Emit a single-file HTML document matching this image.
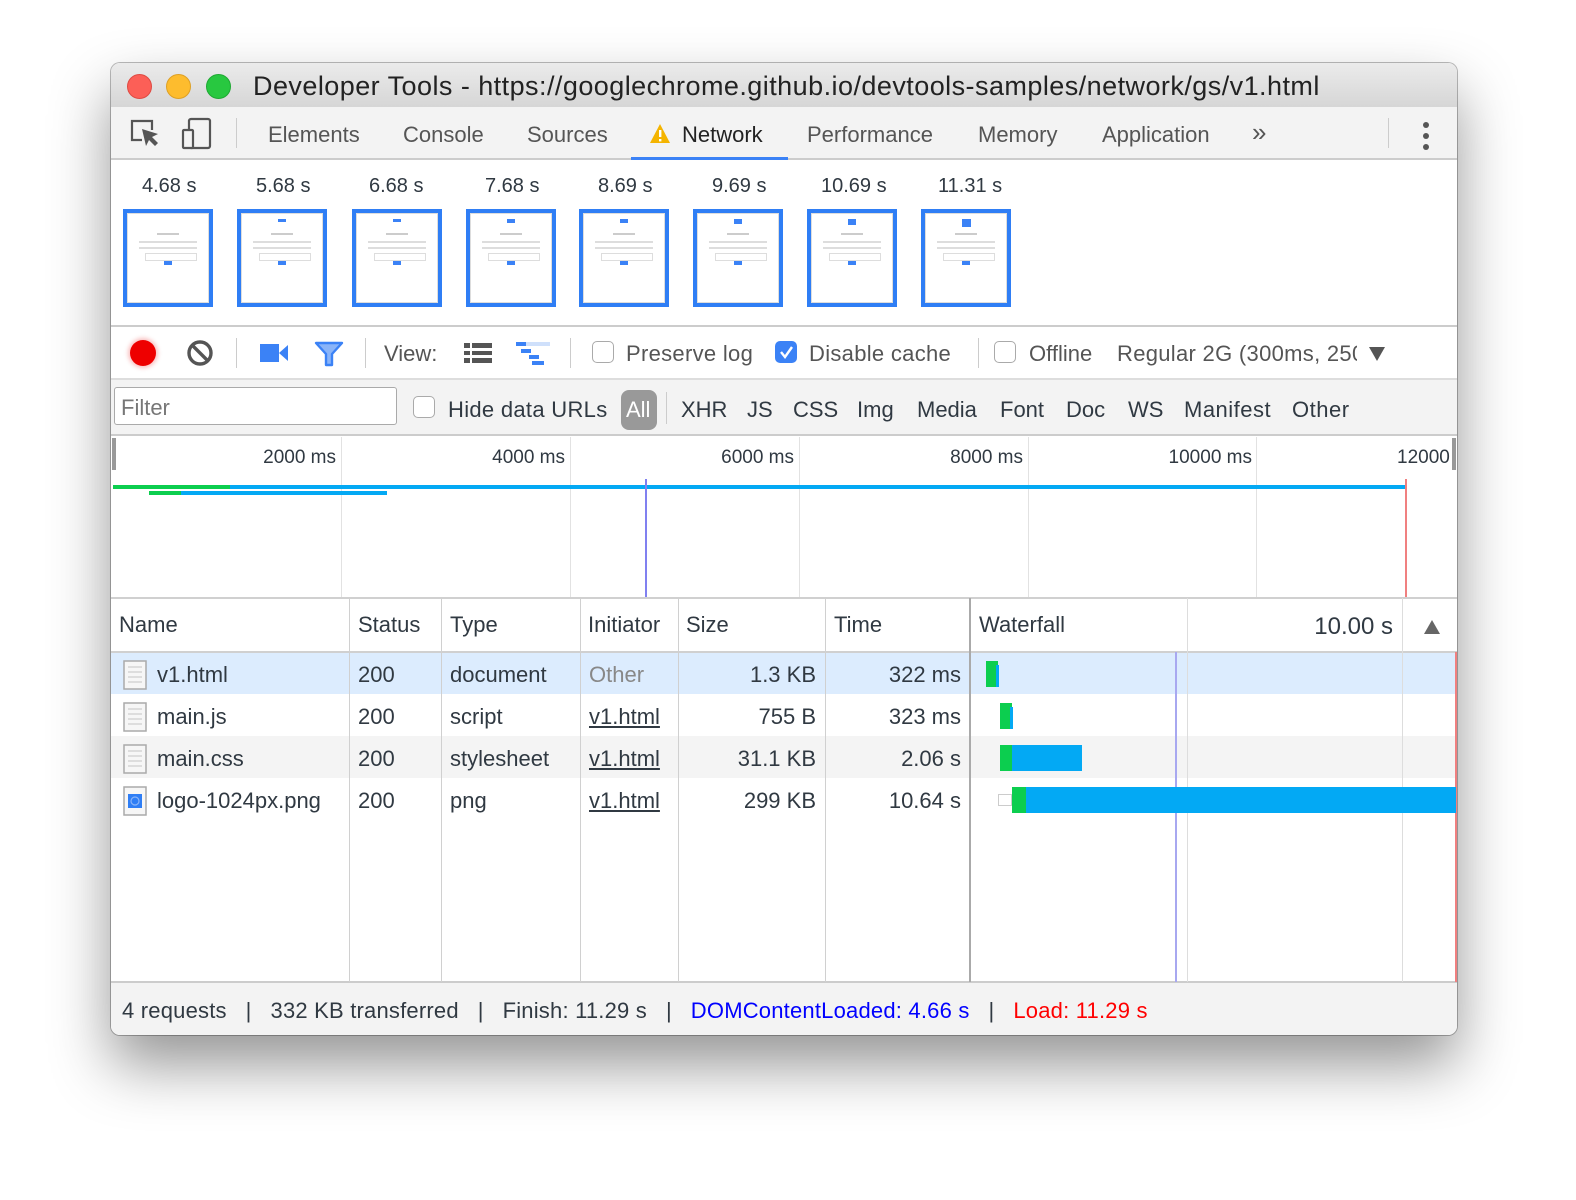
<!DOCTYPE html>
<html><head><meta charset="utf-8"><style>
*{margin:0;padding:0;box-sizing:border-box}
body{width:1576px;height:1200px;background:#fff;position:relative;overflow:hidden;font-family:"Liberation Sans",Arial,sans-serif;color:#303942}
.a{position:absolute}
.t{position:absolute;white-space:nowrap;font-size:22px;line-height:26px;color:#303942}
.g{color:#555}
.r{text-align:right}
.vl{position:absolute;width:1px;background:#d0d0d0}
.hl{position:absolute;height:2px;background:#d0d0d0}
.fr{position:absolute;top:209px;width:90px;height:98px;border:4px solid #2f7ef5;background:#fff;box-shadow:inset 0 0 0 1px #ddd}
.fr i{position:absolute;display:block}
.cb{position:absolute;width:22px;height:22px;border:1.5px solid #aaa;border-radius:5px;background:#fff}
</style></head><body>
<div class="a" style="left:111px;top:63px;width:1346px;height:972px;border-radius:9px;background:#fff;box-shadow:0 30px 60px rgba(0,0,0,0.42),0 0 0 1px #bbb;overflow:hidden">
 <div class="a" style="left:0;top:0;width:1346px;height:44px;background:linear-gradient(#ebebeb,#d6d6d6)"></div>
 <div class="a" style="left:0;top:44px;width:1346px;height:53px;background:#f3f3f3;border-bottom:2px solid #ccc"></div>
 <div class="a" style="left:0;top:262px;width:1346px;height:2px;background:#ccc"></div>
 <div class="a" style="left:0;top:315px;width:1346px;height:58px;background:#f3f3f3;border-top:2px solid #ddd;border-bottom:2px solid #ccc"></div>
 <div class="a" style="left:0;top:918px;width:1346px;height:54px;background:#f3f3f3;border-top:2px solid #ccc"></div>
</div>
<div class="a" style="left:127px;top:74px;width:25px;height:25px;border-radius:50%;background:#fc5f57;border:1px solid #de4a42"></div>
<div class="a" style="left:166px;top:74px;width:25px;height:25px;border-radius:50%;background:#fdbc2e;border:1px solid #dea024"></div>
<div class="a" style="left:206px;top:74px;width:25px;height:25px;border-radius:50%;background:#28c840;border:1px solid #1ea932"></div>
<div class="t" style="left:253px;top:70px;font-size:27px;line-height:32px;letter-spacing:0.45px;color:#222">Developer Tools - https://googlechrome.github.io/devtools-samples/network/gs/v1.html</div>
<svg class="a" style="left:128px;top:118px" width="34" height="32" viewBox="0 0 34 32"><path d="M14 22H4V3h20v9" fill="none" stroke="#555" stroke-width="2.2"/><path d="M14 11l4 17 3-6 6 6 3-3-6-6 6-3z" fill="#555"/></svg>
<svg class="a" style="left:180px;top:117px" width="34" height="34" viewBox="0 0 34 34"><rect x="9" y="2" width="21" height="29" rx="2" fill="none" stroke="#555" stroke-width="2.2"/><rect x="3" y="13" width="10" height="18" rx="1" fill="#f3f3f3" stroke="#555" stroke-width="2.2"/></svg>
<div class="vl" style="left:236px;top:118px;height:30px;background:#ccc"></div>
<div class="t g" style="left:268px;top:122px">Elements</div>
<div class="t g" style="left:403px;top:122px">Console</div>
<div class="t g" style="left:527px;top:122px">Sources</div>
<svg class="a" style="left:649px;top:123px" width="22" height="22" viewBox="0 0 22 22"><path d="M11 1L21 20H1z" fill="#f4b400"/><rect x="10" y="7" width="2.4" height="7" fill="#fff"/><rect x="10" y="16" width="2.4" height="2.4" fill="#fff"/></svg>
<div class="t" style="left:682px;top:122px;color:#222">Network</div>
<div class="a" style="left:631px;top:157px;width:157px;height:3px;background:#3b82f6"></div>
<div class="t g" style="left:807px;top:122px">Performance</div>
<div class="t g" style="left:978px;top:122px">Memory</div>
<div class="t g" style="left:1102px;top:122px">Application</div>
<div class="t g" style="left:1252px;top:119px;font-size:26px">»</div>
<div class="vl" style="left:1388px;top:118px;height:30px;background:#ccc"></div>
<div class="a" style="left:1423px;top:122px;width:6px;height:6px;border-radius:50%;background:#555;box-shadow:0 11px 0 #555,0 22px 0 #555"></div>
<div class="t" style="left:142px;top:173px;font-size:20px">4.68 s</div>
<div class="t" style="left:256px;top:173px;font-size:20px">5.68 s</div>
<div class="t" style="left:369px;top:173px;font-size:20px">6.68 s</div>
<div class="t" style="left:485px;top:173px;font-size:20px">7.68 s</div>
<div class="t" style="left:598px;top:173px;font-size:20px">8.69 s</div>
<div class="t" style="left:712px;top:173px;font-size:20px">9.69 s</div>
<div class="t" style="left:821px;top:173px;font-size:20px">10.69 s</div>
<div class="t" style="left:938px;top:173px;font-size:20px">11.31 s</div>
<div class="fr" style="left:123px"><i style="left:30px;top:20px;width:22px;height:2px;background:#ccc"></i><i style="left:12px;top:28px;width:58px;height:2px;background:#ddd"></i><i style="left:12px;top:34px;width:58px;height:2px;background:#ddd"></i><i style="left:18px;top:40px;width:52px;height:8px;border:1px solid #ddd"></i><i style="left:37px;top:48px;width:8px;height:4px;background:#3b82f6"></i></div>
<div class="fr" style="left:237px"><i style="left:37px;top:6px;width:8px;height:3px;background:#3b82f6"></i><i style="left:30px;top:20px;width:22px;height:2px;background:#ccc"></i><i style="left:12px;top:28px;width:58px;height:2px;background:#ddd"></i><i style="left:12px;top:34px;width:58px;height:2px;background:#ddd"></i><i style="left:18px;top:40px;width:52px;height:8px;border:1px solid #ddd"></i><i style="left:37px;top:48px;width:8px;height:4px;background:#3b82f6"></i></div>
<div class="fr" style="left:352px"><i style="left:37px;top:6px;width:8px;height:3px;background:#3b82f6"></i><i style="left:30px;top:20px;width:22px;height:2px;background:#ccc"></i><i style="left:12px;top:28px;width:58px;height:2px;background:#ddd"></i><i style="left:12px;top:34px;width:58px;height:2px;background:#ddd"></i><i style="left:18px;top:40px;width:52px;height:8px;border:1px solid #ddd"></i><i style="left:37px;top:48px;width:8px;height:4px;background:#3b82f6"></i></div>
<div class="fr" style="left:466px"><i style="left:37px;top:6px;width:8px;height:4px;background:#3b82f6"></i><i style="left:30px;top:20px;width:22px;height:2px;background:#ccc"></i><i style="left:12px;top:28px;width:58px;height:2px;background:#ddd"></i><i style="left:12px;top:34px;width:58px;height:2px;background:#ddd"></i><i style="left:18px;top:40px;width:52px;height:8px;border:1px solid #ddd"></i><i style="left:37px;top:48px;width:8px;height:4px;background:#3b82f6"></i></div>
<div class="fr" style="left:579px"><i style="left:37px;top:6px;width:8px;height:4px;background:#3b82f6"></i><i style="left:30px;top:20px;width:22px;height:2px;background:#ccc"></i><i style="left:12px;top:28px;width:58px;height:2px;background:#ddd"></i><i style="left:12px;top:34px;width:58px;height:2px;background:#ddd"></i><i style="left:18px;top:40px;width:52px;height:8px;border:1px solid #ddd"></i><i style="left:37px;top:48px;width:8px;height:4px;background:#3b82f6"></i></div>
<div class="fr" style="left:693px"><i style="left:37px;top:6px;width:8px;height:5px;background:#3b82f6"></i><i style="left:30px;top:20px;width:22px;height:2px;background:#ccc"></i><i style="left:12px;top:28px;width:58px;height:2px;background:#ddd"></i><i style="left:12px;top:34px;width:58px;height:2px;background:#ddd"></i><i style="left:18px;top:40px;width:52px;height:8px;border:1px solid #ddd"></i><i style="left:37px;top:48px;width:8px;height:4px;background:#3b82f6"></i></div>
<div class="fr" style="left:807px"><i style="left:37px;top:6px;width:8px;height:6px;background:#3b82f6"></i><i style="left:30px;top:20px;width:22px;height:2px;background:#ccc"></i><i style="left:12px;top:28px;width:58px;height:2px;background:#ddd"></i><i style="left:12px;top:34px;width:58px;height:2px;background:#ddd"></i><i style="left:18px;top:40px;width:52px;height:8px;border:1px solid #ddd"></i><i style="left:37px;top:48px;width:8px;height:4px;background:#3b82f6"></i></div>
<div class="fr" style="left:921px"><i style="left:37px;top:6px;width:9px;height:8px;background:#3b82f6"></i><i style="left:30px;top:20px;width:22px;height:2px;background:#ccc"></i><i style="left:12px;top:28px;width:58px;height:2px;background:#ddd"></i><i style="left:12px;top:34px;width:58px;height:2px;background:#ddd"></i><i style="left:18px;top:40px;width:52px;height:8px;border:1px solid #ddd"></i><i style="left:37px;top:48px;width:8px;height:4px;background:#3b82f6"></i></div>
<div class="a" style="left:130px;top:340px;width:26px;height:26px;border-radius:50%;background:#e00;box-shadow:0 0 4px 2px rgba(230,0,0,0.25)"></div>
<svg class="a" style="left:186px;top:339px" width="28" height="28" viewBox="0 0 28 28"><circle cx="14" cy="14" r="11" fill="none" stroke="#555" stroke-width="3.4"/><path d="M6 6l16 16" stroke="#555" stroke-width="3.4"/></svg>
<div class="vl" style="left:236px;top:338px;height:30px;background:#ccc"></div>
<svg class="a" style="left:259px;top:342px" width="30" height="22" viewBox="0 0 30 22"><rect x="1" y="2" width="19" height="18" fill="#3b82f6"/><path d="M20 11l9-8v16z" fill="#3b82f6"/></svg>
<svg class="a" style="left:314px;top:341px" width="30" height="26" viewBox="0 0 30 26"><path d="M2 2h26l-10 11v11h-6V13z" fill="#8ab4f8" stroke="#3b82f6" stroke-width="2.4" stroke-linejoin="round"/></svg>
<div class="vl" style="left:365px;top:338px;height:30px;background:#ccc"></div>
<div class="t g" style="left:384px;top:341px">View:</div>
<svg class="a" style="left:464px;top:342px" width="28" height="22" viewBox="0 0 28 22"><g fill="#555"><rect x="0" y="1" width="6" height="5"/><rect x="8" y="1" width="20" height="5"/><rect x="0" y="9" width="6" height="4"/><rect x="8" y="9" width="20" height="4"/><rect x="0" y="16" width="6" height="5"/><rect x="8" y="16" width="20" height="5"/></g></svg>
<svg class="a" style="left:516px;top:342px" width="34" height="24" viewBox="0 0 34 24"><rect x="0" y="0" width="10" height="4" fill="#3b82f6"/><rect x="10" y="0" width="24" height="4" fill="#cfe0fb"/><rect x="5" y="7" width="10" height="4" fill="#3b82f6"/><rect x="13" y="13" width="10" height="4" fill="#3b82f6"/><rect x="16" y="19" width="12" height="4" fill="#3b82f6"/></svg>
<div class="vl" style="left:570px;top:338px;height:30px;background:#ccc"></div>
<div class="cb" style="left:592px;top:341px"></div>
<div class="t g" style="left:626px;top:341px;letter-spacing:0.3px">Preserve log</div>
<div class="a" style="left:775px;top:341px;width:22px;height:22px;border-radius:5px;background:#3b82f6"></div>
<svg class="a" style="left:775px;top:341px" width="22" height="22" viewBox="0 0 22 22"><path d="M6 11l4 5 7-10" fill="none" stroke="#fff" stroke-width="2.4"/></svg>
<div class="t g" style="left:809px;top:341px;letter-spacing:0.3px">Disable cache</div>
<div class="vl" style="left:978px;top:338px;height:30px;background:#ccc"></div>
<div class="cb" style="left:994px;top:341px"></div>
<div class="t g" style="left:1029px;top:341px">Offline</div>
<div class="a" style="left:1117px;top:341px;width:240px;height:26px;overflow:hidden"><div class="t g" style="left:0;top:0;letter-spacing:0.3px">Regular 2G (300ms, 250kb/s)</div></div>
<svg class="a" style="left:1368px;top:346px" width="18" height="16" viewBox="0 0 18 16"><path d="M1 1h16l-8 14z" fill="#555"/></svg>
<div class="a" style="left:114px;top:387px;width:283px;height:38px;background:#fff;border:1.5px solid #aaa;border-radius:3px"></div>
<div class="t" style="left:121px;top:395px;color:#777">Filter</div>
<div class="cb" style="left:413px;top:396px"></div>
<div class="t" style="left:448px;top:397px;letter-spacing:0.3px">Hide data URLs</div>
<div class="a" style="left:621px;top:390px;width:36px;height:40px;border-radius:8px;background:#999"></div>
<div class="t" style="left:626px;top:397px;color:#fff">All</div>
<div class="vl" style="left:666px;top:392px;height:32px;background:#ccc"></div>
<div class="t" style="left:681px;top:397px">XHR</div>
<div class="t" style="left:747px;top:397px">JS</div>
<div class="t" style="left:793px;top:397px">CSS</div>
<div class="t" style="left:857px;top:397px">Img</div>
<div class="t" style="left:917px;top:397px">Media</div>
<div class="t" style="left:1000px;top:397px">Font</div>
<div class="t" style="left:1066px;top:397px">Doc</div>
<div class="t" style="left:1128px;top:397px">WS</div>
<div class="t" style="left:1184px;top:397px;letter-spacing:0.5px">Manifest</div>
<div class="t" style="left:1292px;top:397px;letter-spacing:0.5px">Other</div>
<div class="a" style="left:112px;top:438px;width:4px;height:32px;background:#999"></div>
<div class="a" style="left:1452px;top:438px;width:4px;height:32px;background:#999"></div>
<div class="vl" style="left:341px;top:437px;height:160px;background:#e2e2e2"></div>
<div class="vl" style="left:570px;top:437px;height:160px;background:#e2e2e2"></div>
<div class="vl" style="left:799px;top:437px;height:160px;background:#e2e2e2"></div>
<div class="vl" style="left:1028px;top:437px;height:160px;background:#e2e2e2"></div>
<div class="vl" style="left:1256px;top:437px;height:160px;background:#e2e2e2"></div>
<div class="t r" style="left:236px;top:445px;width:100px;font-size:19px">2000 ms</div>
<div class="t r" style="left:465px;top:445px;width:100px;font-size:19px">4000 ms</div>
<div class="t r" style="left:694px;top:445px;width:100px;font-size:19px">6000 ms</div>
<div class="t r" style="left:923px;top:445px;width:100px;font-size:19px">8000 ms</div>
<div class="t r" style="left:1150px;top:445px;width:102px;font-size:19px">10000 ms</div>
<div class="t" style="left:1397px;top:445px;font-size:19px">12000</div>
<div class="a" style="left:113px;top:485px;width:1293px;height:4px;background:#03a9f4"></div>
<div class="a" style="left:113px;top:485px;width:117px;height:4px;background:#0cce4f"></div>
<div class="a" style="left:149px;top:491px;width:238px;height:4px;background:#03a9f4"></div>
<div class="a" style="left:149px;top:491px;width:32px;height:4px;background:#0cce4f"></div>
<div class="a" style="left:645px;top:479px;width:2px;height:118px;background:#8080f0"></div>
<div class="a" style="left:1405px;top:479px;width:2px;height:118px;background:#f08080"></div>
<div class="hl" style="left:111px;top:597px;width:1346px"></div>
<div class="hl" style="left:111px;top:651px;width:1346px"></div>
<div class="a" style="left:111px;top:653px;width:1346px;height:41px;background:#dcecfe"></div>
<div class="a" style="left:111px;top:736px;width:1346px;height:42px;background:#f4f4f4"></div>
<div class="vl" style="left:349px;top:598px;height:384px"></div>
<div class="vl" style="left:441px;top:598px;height:384px"></div>
<div class="vl" style="left:580px;top:598px;height:384px"></div>
<div class="vl" style="left:678px;top:598px;height:384px"></div>
<div class="vl" style="left:825px;top:598px;height:384px"></div>
<div class="a" style="left:969px;top:598px;width:2px;height:384px;background:#aaa"></div>
<div class="vl" style="left:1187px;top:598px;height:384px;background:#ddd"></div>
<div class="vl" style="left:1402px;top:598px;height:384px;background:#ddd"></div>
<div class="a" style="left:1175px;top:652px;width:2px;height:330px;background:#a8a8f0"></div>
<div class="a" style="left:1455px;top:652px;width:2px;height:330px;background:#f08080"></div>
<div class="t" style="left:119px;top:612px">Name</div>
<div class="t" style="left:358px;top:612px">Status</div>
<div class="t" style="left:450px;top:612px">Type</div>
<div class="t" style="left:588px;top:612px">Initiator</div>
<div class="t" style="left:686px;top:612px">Size</div>
<div class="t" style="left:834px;top:612px">Time</div>
<div class="t" style="left:979px;top:612px">Waterfall</div>
<div class="t r" style="left:1250px;top:614px;width:143px;font-size:24px">10.00 s</div>
<svg class="a" style="left:1423px;top:619px" width="18" height="16" viewBox="0 0 18 16"><path d="M1 15h16L9 1z" fill="#666"/></svg>
<svg class="a" style="left:123px;top:660px" width="24" height="30" viewBox="0 0 24 30"><rect x="1" y="1" width="22" height="28" fill="#f6f6f6" stroke="#aaa" stroke-width="1.5"/><g stroke="#ddd" stroke-width="2"><path d="M5 7h14M5 12h14M5 17h14M5 22h14"/></g></svg>
<svg class="a" style="left:123px;top:702px" width="24" height="30" viewBox="0 0 24 30"><rect x="1" y="1" width="22" height="28" fill="#f6f6f6" stroke="#aaa" stroke-width="1.5"/><g stroke="#ddd" stroke-width="2"><path d="M5 7h14M5 12h14M5 17h14M5 22h14"/></g></svg>
<svg class="a" style="left:123px;top:744px" width="24" height="30" viewBox="0 0 24 30"><rect x="1" y="1" width="22" height="28" fill="#f6f6f6" stroke="#aaa" stroke-width="1.5"/><g stroke="#ddd" stroke-width="2"><path d="M5 7h14M5 12h14M5 17h14M5 22h14"/></g></svg>
<svg class="a" style="left:123px;top:786px" width="24" height="30" viewBox="0 0 24 30"><rect x="1" y="1" width="22" height="28" fill="#f6f6f6" stroke="#aaa" stroke-width="1.5"/><rect x="5" y="8" width="14" height="14" fill="#2f7ef5"/><circle cx="12" cy="15" r="4" fill="none" stroke="#8ab4f8" stroke-width="1.2"/></svg>
<div class="t" style="left:157px;top:662px">v1.html</div>
<div class="t" style="left:157px;top:704px">main.js</div>
<div class="t" style="left:157px;top:746px">main.css</div>
<div class="t" style="left:157px;top:788px">logo-1024px.png</div>
<div class="t" style="left:358px;top:662px">200</div>
<div class="t" style="left:358px;top:704px">200</div>
<div class="t" style="left:358px;top:746px">200</div>
<div class="t" style="left:358px;top:788px">200</div>
<div class="t" style="left:450px;top:662px">document</div>
<div class="t" style="left:450px;top:704px">script</div>
<div class="t" style="left:450px;top:746px">stylesheet</div>
<div class="t" style="left:450px;top:788px">png</div>
<div class="t" style="left:589px;top:662px;color:#888">Other</div>
<div class="t" style="left:589px;top:704px;text-decoration:underline">v1.html</div>
<div class="t" style="left:589px;top:746px;text-decoration:underline">v1.html</div>
<div class="t" style="left:589px;top:788px;text-decoration:underline">v1.html</div>
<div class="t r" style="left:690px;top:662px;width:126px">1.3 KB</div>
<div class="t r" style="left:690px;top:704px;width:126px">755 B</div>
<div class="t r" style="left:690px;top:746px;width:126px">31.1 KB</div>
<div class="t r" style="left:690px;top:788px;width:126px">299 KB</div>
<div class="t r" style="left:835px;top:662px;width:126px">322 ms</div>
<div class="t r" style="left:835px;top:704px;width:126px">323 ms</div>
<div class="t r" style="left:835px;top:746px;width:126px">2.06 s</div>
<div class="t r" style="left:835px;top:788px;width:126px">10.64 s</div>
<div class="a" style="left:986px;top:661px;width:12px;height:26px;background:#0cce4f"></div>
<div class="a" style="left:996px;top:665px;width:3px;height:22px;background:#03a9f4"></div>
<div class="a" style="left:1000px;top:703px;width:12px;height:26px;background:#0cce4f"></div>
<div class="a" style="left:1010px;top:707px;width:3px;height:22px;background:#03a9f4"></div>
<div class="a" style="left:1000px;top:745px;width:12px;height:26px;background:#0cce4f"></div>
<div class="a" style="left:1012px;top:745px;width:70px;height:26px;background:#03a9f4"></div>
<div class="a" style="left:998px;top:794px;width:14px;height:12px;border:1.5px solid #ccc;background:#fff"></div>
<div class="a" style="left:1012px;top:787px;width:14px;height:26px;background:#0cce4f"></div>
<div class="a" style="left:1026px;top:787px;width:430px;height:26px;background:#03a9f4"></div>
<div class="t" style="left:122px;top:998px;letter-spacing:0.2px">4 requests &nbsp;&nbsp;|&nbsp;&nbsp; 332 KB transferred &nbsp;&nbsp;|&nbsp;&nbsp; Finish: 11.29 s &nbsp;&nbsp;|&nbsp;&nbsp; <span style="color:#00f">DOMContentLoaded: 4.66 s</span> &nbsp;&nbsp;|&nbsp;&nbsp; <span style="color:#f00">Load: 11.29 s</span></div>
</body></html>
